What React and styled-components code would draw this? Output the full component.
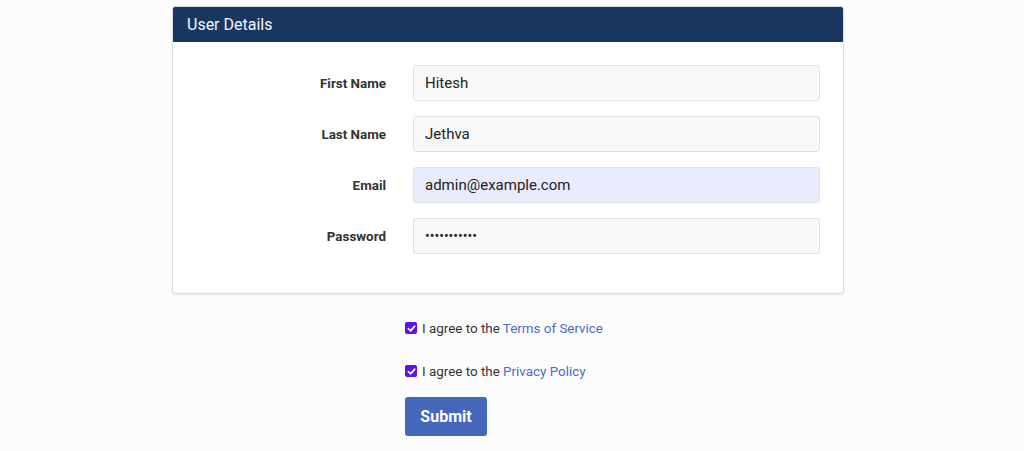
import React from "react";
import styled, { createGlobalStyle } from "styled-components";

const Global = createGlobalStyle`
  html, body { margin: 0; padding: 0; background: #fcfcfc; }
  body { font-family: Roboto, "Liberation Sans", sans-serif; color: #333; }
`;

const Page = styled.div`
  width: 1024px;
  height: 451px;
  padding-top: 6px;
  box-sizing: border-box;
  overflow: hidden;
`;

const Card = styled.section`
  margin-left: 172px;
  width: 672px;
  background: #fff;
  border: 1px solid #dcdcdc;
  border-radius: 3px;
  box-shadow: 0 1px 2px rgba(0,0,0,0.08);
  box-sizing: border-box;
`;

const CardHeader = styled.div`
  background: #183660;
  color: #f4f6fa;
  height: 35px;
  padding: 0 14px;
  display: flex;
  align-items: center;
  font-size: 16px;
  border-radius: 2px 2px 0 0;
`;

const CardBody = styled.div`
  padding: 23px 23px 39px 0;
  display: flex;
  flex-direction: column;
  gap: 15px;
`;

const Row = styled.div`
  display: grid;
  grid-template-columns: 213px 407px;
  column-gap: 27px;
  align-items: center;
`;

const Label = styled.label`
  text-align: right;
  font-weight: 700;
  font-size: 13.4px;
  color: #333;
`;

const Input = styled.div`
  height: 36px;
  box-sizing: border-box;
  border: 1px solid #e2e2e2;
  border-radius: 3px;
  background: ${p => (p.$autofill ? "#e8ecfd" : "#f8f8f8")};
  display: flex;
  align-items: center;
  padding: 0 11px;
  font-size: ${p => (p.$dots ? "14px" : "15px")};
  color: #222;
`;

const Footer = styled.div`
  margin-left: 405px;
  padding-top: 24px;
  display: flex;
  flex-direction: column;
  align-items: flex-start;
`;

const CheckRow = styled.label`
  display: flex;
  align-items: center;
  gap: 5px;
  height: 20px;
  font-size: 13.4px;
  color: #333;
  margin-bottom: ${p => p.$mb || 0}px;
`;

const Box = styled.span`
  width: 12px;
  height: 12px;
  border-radius: 2px;
  background: #5b13e6;
  display: inline-flex;
  align-items: center;
  justify-content: center;
`;

const Link = styled.a`
  color: #4a6cc4;
  text-decoration: none;
`;

const Submit = styled.button`
  margin-top: 16px;
  width: 82px;
  height: 39px;
  border: none;
  border-radius: 3px;
  background: #4466bb;
  color: #fff;
  font-family: Roboto, "Liberation Sans", sans-serif;
  font-weight: 700;
  font-size: 16px;
`;

const Check = () => (
  <Box>
    <svg width="9" height="9" viewBox="0 0 10 10">
      <path d="M1.5 5.2 L4 7.6 L8.6 2.4" fill="none" stroke="#fff" strokeWidth="1.8" strokeLinecap="round" strokeLinejoin="round" />
    </svg>
  </Box>
);

const fields = [
  { label: "First Name", value: "Hitesh" },
  { label: "Last Name", value: "Jethva" },
  { label: "Email", value: "admin@example.com", autofill: true },
  { label: "Password", value: "•••••••••••", dots: true },
];

export default function App() {
  return (
    <Page>
      <Global />
      <Card>
        <CardHeader>User Details</CardHeader>
        <CardBody>
          {fields.map(f => (
            <Row key={f.label}>
              <Label>{f.label}</Label>
              <Input $autofill={f.autofill} $dots={f.dots}>{f.value}</Input>
            </Row>
          ))}
        </CardBody>
      </Card>
      <Footer>
        <CheckRow $mb={23}>
          <Check />
          <span>I agree to the <Link href="#">Terms of Service</Link></span>
        </CheckRow>
        <CheckRow>
          <Check />
          <span>I agree to the <Link href="#">Privacy Policy</Link></span>
        </CheckRow>
        <Submit>Submit</Submit>
      </Footer>
    </Page>
  );
}
